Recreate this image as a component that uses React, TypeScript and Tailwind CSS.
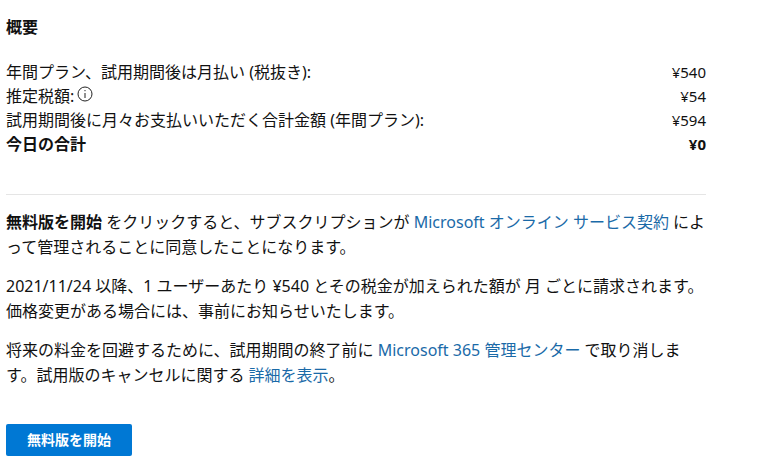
const rows = [
  { label: '年間プラン、試用期間後は月払い (税抜き):', price: '¥540' },
  { label: '推定税額:', price: '¥54', info: true },
  { label: '試用期間後に月々お支払いいただく合計金額 (年間プラン):', price: '¥594' },
  { label: '今日の合計', price: '¥0', bold: true },
]

function InfoIcon() {
  return (
    <svg width="16" height="16" viewBox="0 0 16 16" fill="none" className="ml-[3px] mb-[4px]">
      <circle cx="8" cy="8" r="7" stroke="#222" strokeWidth="1" />
      <rect x="7.5" y="7" width="1" height="5" fill="#222" />
      <rect x="7.5" y="4" width="1" height="1.2" fill="#222" />
    </svg>
  )
}

export default function App() {
  return (
    <div
      className="w-[772px] h-[469px] overflow-hidden bg-white pl-[6px] pt-[17px] text-[16px] leading-[24px] text-[#111]"
      style={{ fontFamily: '"Noto Sans", "Noto Sans CJK JP", sans-serif' }}
    >
      <div className="w-[700px]">
        <h2 className="font-bold text-[16px] leading-[20px]">概要</h2>
        <div className="mt-[23px]">
          {rows.map((row) => (
            <div key={row.label} className={`flex justify-between ${row.bold ? 'font-bold' : ''}`}>
              <span className="flex items-center">
                {row.label}
                {row.info && <InfoIcon />}
              </span>
              <span className="text-[15px]">{row.price}</span>
            </div>
          ))}
        </div>
        <div className="mt-[38px] border-t border-[#e5e5e5]" />
        <p className="mt-[15px] leading-[25px]">
          <b>無料版を開始</b> をクリックすると、サブスクリプションが{' '}
          <a className="text-[#1a6aa8]">Microsoft オンライン サービス契約</a> によって管理されることに同意したことになります。
        </p>
        <p className="mt-[14px] leading-[25px]">
          2021/11/24 以降、1 ユーザーあたり ¥540 とその税金が加えられた額が 月 ごとに請求されます。価格変更がある場合には、事前にお知らせいたします。
        </p>
        <p className="mt-[14px] leading-[25px]">
          将来の料金を回避するために、試用期間の終了前に{' '}
          <a className="text-[#1a6aa8]">Microsoft 365 管理センター</a> で取り消します。試用版のキャンセルに関する{' '}
          <a className="text-[#1a6aa8]">詳細を表示</a>。
        </p>
        <button className="mt-[36px] h-[32px] w-[126px] rounded-[2px] bg-[#0078d4] text-[14px] leading-[20px] font-bold text-white">
          無料版を開始
        </button>
      </div>
    </div>
  )
}
